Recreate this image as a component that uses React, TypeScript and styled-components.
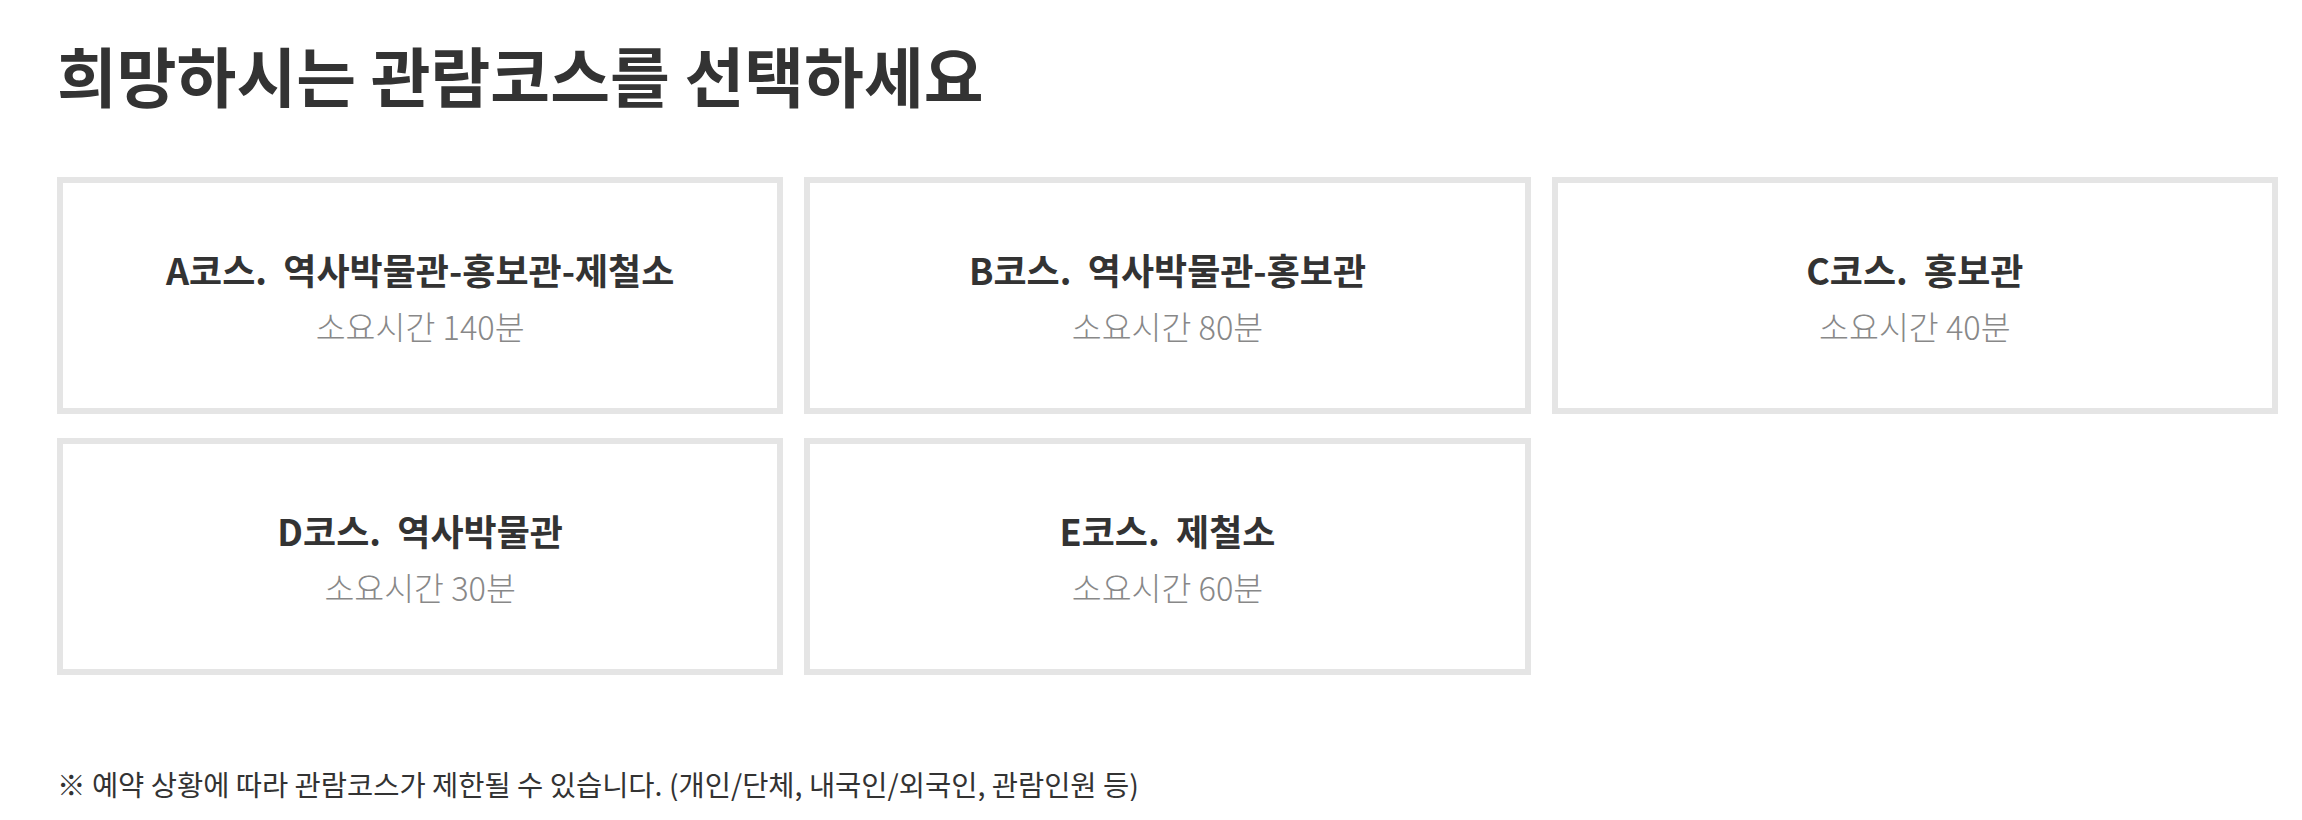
import styled, { createGlobalStyle } from 'styled-components';

const GlobalStyle = createGlobalStyle`
  html, body {
    margin: 0;
    padding: 0;
    background: #fff;
  }
  body {
    font-family: 'Noto Sans CJK KR', 'Noto Sans', sans-serif;
    color: #333;
  }
`;

const courses = [
  { code: 'A', route: '역사박물관-홍보관-제철소', time: 140 },
  { code: 'B', route: '역사박물관-홍보관', time: 80 },
  { code: 'C', route: '홍보관', time: 40 },
  { code: 'D', route: '역사박물관', time: 30 },
  { code: 'E', route: '제철소', time: 60 },
];

function App() {
  return (
    <>
      <GlobalStyle />
      <Page>
        <Title>희망하시는 관람코스를 선택하세요</Title>
        <CourseGrid>
          {courses.map((c) => (
            <CourseCard key={c.code}>
              <CourseName>
                {c.code}코스.&nbsp; {c.route}
              </CourseName>
              <Duration>소요시간 {c.time}분</Duration>
            </CourseCard>
          ))}
        </CourseGrid>
        <Notice>
          ※ 예약 상황에 따라 관람코스가 제한될 수 있습니다. (개인/단체, 내국인/외국인, 관람인원 등)
        </Notice>
      </Page>
    </>
  );
}

export default App;

const Page = styled.div`
  padding: 42px 24px 0 57px;
`;

const Title = styled.h1`
  margin: 0;
  font-size: 65px;
  line-height: 1;
  font-weight: 700;
  color: #333;
`;

const CourseGrid = styled.div`
  display: grid;
  grid-template-columns: repeat(3, 1fr);
  column-gap: 21px;
  row-gap: 24px;
  margin-top: 70px;
`;

const CourseCard = styled.div`
  box-sizing: border-box;
  height: 237px;
  border: 6px solid #e5e5e5;
  display: flex;
  flex-direction: column;
  align-items: center;
  justify-content: center;
  padding-top: 2px;
`;

const CourseName = styled.div`
  font-size: 36px;
  font-weight: 700;
  line-height: 1.2;
  color: #333;
`;

const Duration = styled.div`
  margin-top: 15px;
  font-size: 32.5px;
  font-weight: 300;
  line-height: 1.2;
  color: #888;
`;

const Notice = styled.p`
  margin: 92px 0 0;
  font-size: 28.5px;
  line-height: 1.2;
  color: #333;
`;
